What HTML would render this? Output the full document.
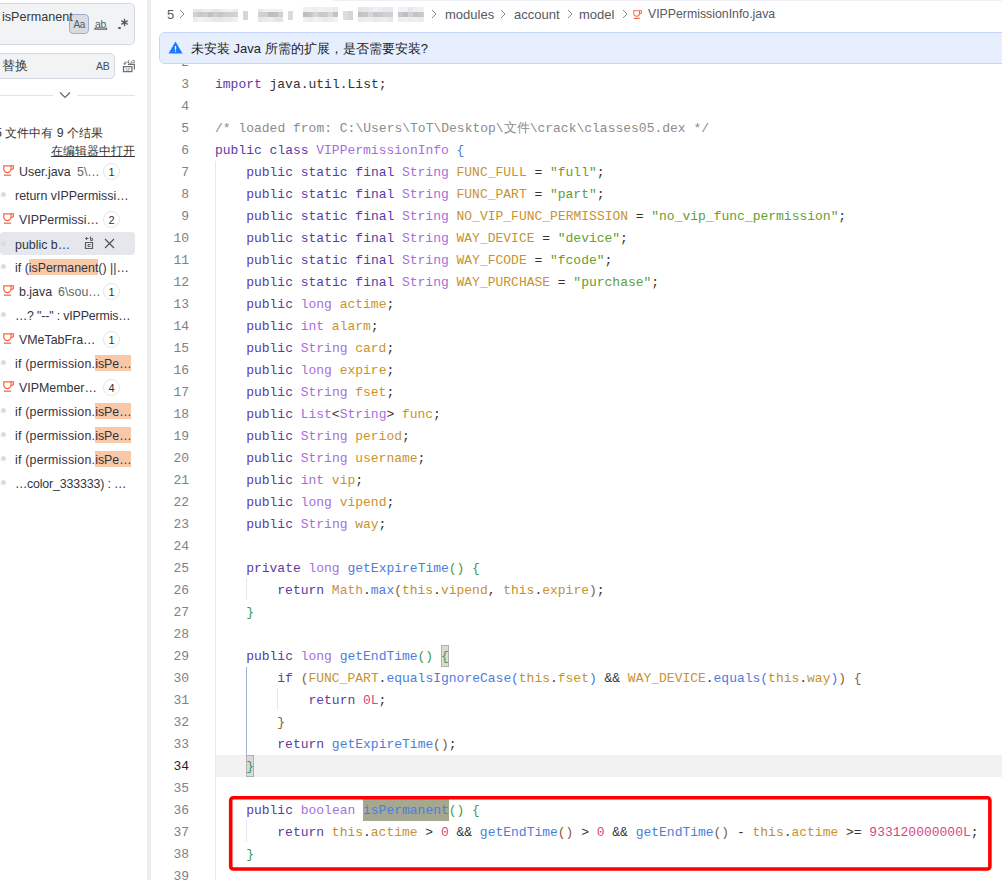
<!DOCTYPE html>
<html><head><meta charset="utf-8">
<style>
*{box-sizing:border-box}
html,body{margin:0;padding:0;width:1002px;height:880px;overflow:hidden;background:#fff;font-family:"Liberation Sans",sans-serif}
.abs{position:absolute}
#side{position:absolute;left:0;top:0;width:147px;height:880px;background:#fff;overflow:hidden}
#strip{position:absolute;left:147px;top:0;width:4px;height:880px;background:#ebedf1}
#editor{position:absolute;left:151px;top:0;width:851px;height:880px;background:#fff;overflow:hidden}
.search{position:absolute;left:-6px;top:3px;width:141px;height:41.5px;background:#f2f3f5;border:1px solid #d3d9e3;border-radius:5px}
.replace{position:absolute;left:-6px;top:53px;width:121px;height:26px;background:#f2f3f5;border:1px solid #d3d9e3;border-radius:5px}
.stxt{position:absolute;font-size:13px;color:#2b2b2b;white-space:pre}
.row{position:absolute;left:0;width:135px;height:24px;font-size:12.4px;line-height:24px;white-space:pre;color:#33343f}
.row.sel{background:#e5e7ec;border-radius:4px;height:23.5px;margin-top:0.5px}
.dot{position:absolute;left:1px;top:9px;width:5px;height:5px;border-radius:50%;background:#dadde3}
.mt{position:absolute;left:15px;top:1px}
.fn{position:absolute;top:1px}
.fp{position:absolute;top:1px;color:#666}
.cup{position:absolute}
.badge{position:absolute;left:103px;top:3.5px;width:17px;height:17px;border:1px solid #e2e5ea;border-radius:50%;font-size:11px;line-height:16px;text-align:center;color:#333;background:#fff}
.hl{background:#f8c9a9;padding-top:2px}
.x{position:absolute;left:104px;top:0;font-size:13px;color:#555}
.rp{position:absolute;left:85px;top:7px;width:8px;height:10px;border:1px solid #777;border-radius:1px}
.ln{position:absolute;left:0;width:38px;height:22px;line-height:22px;text-align:right;font-family:"Liberation Mono",monospace;font-size:13px}
.cl{position:absolute;left:64px;height:22px;line-height:22px;font-family:"Liberation Mono",monospace;font-size:13px;white-space:pre}
.guide{position:absolute;width:1px;background:#e3e7ee}
</style></head><body>
<div id="side">
  <div class="search"></div>
  <div class="abs" style="left:69px;top:14px;width:20px;height:19.5px;background:#d7dbe2;border:1px solid #9fb1cb;border-radius:4px"></div>
  <div class="stxt" style="left:2px;top:10px;font-size:12.6px;color:#383838;z-index:2">isPermanent</div>
  <div class="abs" style="left:73.5px;top:18.5px;font-size:10px;line-height:12px;color:#555a62;letter-spacing:-0.3px">Aa</div>
  <div class="abs" style="left:95px;top:17.5px;font-size:10.5px;line-height:12px;color:#555a62;letter-spacing:-0.3px">ab</div>
  <svg class="abs" style="left:94px;top:27px" width="14" height="4" viewBox="0 0 14 4"><path d="M1 0.8v1.4h11.5v-1.4" fill="none" stroke="#555a62" stroke-width="1.2"/></svg>
  <div class="abs" style="left:118px;top:26.5px;width:2.5px;height:2.5px;border-radius:50%;background:#555a62"></div>
  <svg class="abs" style="left:120px;top:18px" width="9" height="9" viewBox="0 0 9 9"><path d="M4.5 0.8v7.4M1.3 2.65l6.4 3.7M1.3 6.35l6.4-3.7" stroke="#555a62" stroke-width="1.3"/></svg>
  <div class="replace"></div>
  <div class="stxt" style="left:2px;top:58px;color:#3a3a3a;font-size:12.6px">替换</div>
  <div class="abs" style="left:96px;top:59px;font-size:10.5px;line-height:14px;color:#4a4e55;letter-spacing:-0.2px">AB</div>
  <svg class="abs" style="left:122px;top:59px" width="14" height="14" viewBox="0 0 14 14"><path d="M1.5 7.6h8.4v5.1H1.5z" fill="none" stroke="#6b6f76" stroke-width="1.3"/><path d="M6 5.3h6.4v5.2" fill="none" stroke="#6b6f76" stroke-width="1.2"/><path d="M3.6 9.6h1.2M6.2 9.6h1.5M4 11h3.6" stroke="#8a8e94" stroke-width="0.9"/><path d="M1 4.2h3.4L2.7 6z" fill="#6b6f76"/><path d="M2.7 4.4V3.2h3.4" fill="none" stroke="#8a8e94" stroke-width="1"/><path d="M6.5 1.2v3h3v-2M10.3 1.5h2v2.2h-2" fill="none" stroke="#8a8e94" stroke-width="1"/></svg>
  <div class="abs" style="left:0;top:95px;width:53px;height:1px;background:#dfe3ea"></div>
  <div class="abs" style="left:77px;top:95px;width:58px;height:1px;background:#dfe3ea"></div>
  <svg class="abs" style="left:59px;top:91px" width="12" height="8" viewBox="0 0 12 8"><path d="M1 1.5l5 5 5-5" fill="none" stroke="#666" stroke-width="1.2"/></svg>
  <div class="stxt" style="left:-5px;top:124.5px;font-size:12.4px;color:#333">5 文件中有 9 个结果</div>
  <div class="stxt" style="left:51px;top:143px;font-size:12.4px;color:#333;text-decoration:underline">在编辑器中打开</div>
  <div class="row" style="top:159px"><svg class="cup" style="left:2.5px;top:6px" width="12" height="12" viewBox="0 0 12 12"><path d="M0.8 0.8h7.2v3.2a3.6 3.6 0 0 1-7.2 0z" fill="none" stroke="#fb6848" stroke-width="1.25"/><path d="M8 0.8h2.4v1.6a2.2 2.2 0 0 1-2.4 2.2" fill="none" stroke="#fb6848" stroke-width="1.25"/><path d="M1 10.2h7.2" stroke="#fb6848" stroke-width="1.25"/></svg><span class="fn" style="left:19px">User.java</span><span class="fp" style="left:77px">5\<span style="letter-spacing:-1.5px;margin-right:1px">…</span></span><span class="badge">1</span></div>
<div class="row" style="top:183px"><span class="dot"></span><span class="mt" style="">return vIPPermissi<span style="letter-spacing:-1.5px;margin-right:1px">…</span></span></div>
<div class="row" style="top:207px"><svg class="cup" style="left:2.5px;top:6px" width="12" height="12" viewBox="0 0 12 12"><path d="M0.8 0.8h7.2v3.2a3.6 3.6 0 0 1-7.2 0z" fill="none" stroke="#fb6848" stroke-width="1.25"/><path d="M8 0.8h2.4v1.6a2.2 2.2 0 0 1-2.4 2.2" fill="none" stroke="#fb6848" stroke-width="1.25"/><path d="M1 10.2h7.2" stroke="#fb6848" stroke-width="1.25"/></svg><span class="fn" style="left:19px">VIPPermissi<span style="letter-spacing:-1.5px;margin-right:1px">…</span></span><span class="badge">2</span></div>
<div class="row sel" style="top:231px"><span class="dot"></span><span class="mt">public b<span style="letter-spacing:-1.5px;margin-right:1px">…</span></span><svg class="abs" style="left:84px;top:3.5px" width="10" height="14" viewBox="0 0 10 14"><path d="M1.5 7.5h7v6h-7z" fill="none" stroke="#5a5e66" stroke-width="1.2"/><path d="M4 9.5h2.5M4 9.5v2h2.5" fill="none" stroke="#5a5e66" stroke-width="1"/><path d="M1.5 3.5h3M3 2l-1.5 1.5L3 5" fill="none" stroke="#5a5e66" stroke-width="1"/><path d="M6.5 1.5v4h2v-2h-2" fill="none" stroke="#5a5e66" stroke-width="1"/></svg><svg class="abs" style="left:104px;top:6.2px" width="11" height="11" viewBox="0 0 11 11"><path d="M1 1l9 9M10 1l-9 9" stroke="#4a4e56" stroke-width="1.1"/></svg></div>
<div class="row" style="top:255px"><span class="dot"></span><span class="mt"><span style="">if (</span><span class="hl">isPermanent</span>() ||<span style="letter-spacing:-1.5px;margin-right:1px">…</span></span></div>
<div class="row" style="top:279px"><svg class="cup" style="left:2.5px;top:6px" width="12" height="12" viewBox="0 0 12 12"><path d="M0.8 0.8h7.2v3.2a3.6 3.6 0 0 1-7.2 0z" fill="none" stroke="#fb6848" stroke-width="1.25"/><path d="M8 0.8h2.4v1.6a2.2 2.2 0 0 1-2.4 2.2" fill="none" stroke="#fb6848" stroke-width="1.25"/><path d="M1 10.2h7.2" stroke="#fb6848" stroke-width="1.25"/></svg><span class="fn" style="left:19px">b.java</span><span class="fp" style="left:58px">6\sou<span style="letter-spacing:-1.5px;margin-right:1px">…</span></span><span class="badge">1</span></div>
<div class="row" style="top:303px"><span class="dot"></span><span class="mt" style=";letter-spacing:-0.15px"><span style="letter-spacing:-1.5px;margin-right:1px">…</span>? &quot;--&quot; : vIPPermis<span style="letter-spacing:-1.5px;margin-right:1px">…</span></span></div>
<div class="row" style="top:327px"><svg class="cup" style="left:2.5px;top:6px" width="12" height="12" viewBox="0 0 12 12"><path d="M0.8 0.8h7.2v3.2a3.6 3.6 0 0 1-7.2 0z" fill="none" stroke="#fb6848" stroke-width="1.25"/><path d="M8 0.8h2.4v1.6a2.2 2.2 0 0 1-2.4 2.2" fill="none" stroke="#fb6848" stroke-width="1.25"/><path d="M1 10.2h7.2" stroke="#fb6848" stroke-width="1.25"/></svg><span class="fn" style="left:19px">VMeTabFra<span style="letter-spacing:-1.5px;margin-right:1px">…</span></span><span class="badge">1</span></div>
<div class="row" style="top:351px"><span class="dot"></span><span class="mt"><span style="letter-spacing:0.2px">if (permission.</span><span class="hl">isPe<span style="letter-spacing:-1.5px;margin-right:1px">…</span></span></span></div>
<div class="row" style="top:375px"><svg class="cup" style="left:2.5px;top:6px" width="12" height="12" viewBox="0 0 12 12"><path d="M0.8 0.8h7.2v3.2a3.6 3.6 0 0 1-7.2 0z" fill="none" stroke="#fb6848" stroke-width="1.25"/><path d="M8 0.8h2.4v1.6a2.2 2.2 0 0 1-2.4 2.2" fill="none" stroke="#fb6848" stroke-width="1.25"/><path d="M1 10.2h7.2" stroke="#fb6848" stroke-width="1.25"/></svg><span class="fn" style="left:19px">VIPMember<span style="letter-spacing:-1.5px;margin-right:1px">…</span></span><span class="badge">4</span></div>
<div class="row" style="top:399px"><span class="dot"></span><span class="mt"><span style="letter-spacing:0.2px">if (permission.</span><span class="hl">isPe<span style="letter-spacing:-1.5px;margin-right:1px">…</span></span></span></div>
<div class="row" style="top:423px"><span class="dot"></span><span class="mt"><span style="letter-spacing:0.2px">if (permission.</span><span class="hl">isPe<span style="letter-spacing:-1.5px;margin-right:1px">…</span></span></span></div>
<div class="row" style="top:447px"><span class="dot"></span><span class="mt"><span style="letter-spacing:0.2px">if (permission.</span><span class="hl">isPe<span style="letter-spacing:-1.5px;margin-right:1px">…</span></span></span></div>
<div class="row" style="top:471px"><span class="dot"></span><span class="mt" style=";letter-spacing:-0.15px"><span style="letter-spacing:-1.5px;margin-right:1px">…</span>color_333333) : <span style="letter-spacing:-1.5px;margin-right:1px">…</span></span></div>
</div>
<div id="strip"></div>
<div id="editor">
  <div class="abs" style="left:182px;top:0;width:700px;height:1px;background:#eef0f5"></div>
  <!-- code -->
  <div class="abs" style="left:64px;top:755px;width:800px;height:22px;background:#f2f2f2"></div>
  <div class="guide" style="left:64px;top:161px;height:719px"></div>
  <div class="guide" style="left:95px;top:578px;height:22px"></div>
  <div class="guide" style="left:95px;top:667px;height:88px;background:#a3b3d2"></div>
  <div class="guide" style="left:126px;top:688px;height:22px"></div>
  <div class="guide" style="left:95px;top:820px;height:22px"></div>
  <div class="abs" style="left:95px;top:755px;width:8px;height:22px;background:#dadada;border:1px solid #b0b0b0"></div>
  <div class="abs" style="left:290px;top:645px;width:8px;height:22px;background:#dadada;border:1px solid #b0b0b0"></div>
  <div class="abs" style="left:212px;top:799px;width:86px;height:22px;background:#a5a890"></div>
  <div class="ln" style="top:52px;color:#7d828a">2</div>
<div class="cl" style="top:52px"></div>
<div class="ln" style="top:74px;color:#7d828a">3</div>
<div class="cl" style="top:74px"><span style="position:absolute;left:0.00px;color:#5a3ca6">import</span><span style="position:absolute;left:54.53px;color:#333333">java.util.List;</span></div>
<div class="ln" style="top:96px;color:#7d828a">4</div>
<div class="cl" style="top:96px"></div>
<div class="ln" style="top:118px;color:#7d828a">5</div>
<div class="cl" style="top:118px"><span style="position:absolute;left:0.00px;color:#8c8c8c">/* loaded from: C:\Users\ToT\Desktop\文件\crack\classes05.dex */</span></div>
<div class="ln" style="top:140px;color:#7d828a">6</div>
<div class="cl" style="top:140px"><span style="position:absolute;left:0.00px;color:#5a3ca6">public class</span><span style="position:absolute;left:101.27px;color:#a66fdc">VIPPermissionInfo</span><span style="position:absolute;left:241.49px;color:#3d7bea">{</span></div>
<div class="ln" style="top:162px;color:#7d828a">7</div>
<div class="cl" style="top:162px"><span style="position:absolute;left:31.16px;color:#5a3ca6">public static final</span><span style="position:absolute;left:186.96px;color:#a66fdc">String</span><span style="position:absolute;left:241.49px;color:#c8932e">FUNC_FULL</span><span style="position:absolute;left:319.39px;color:#333333">=</span><span style="position:absolute;left:334.97px;color:#62a033">&quot;full&quot;</span><span style="position:absolute;left:381.71px;color:#333333">;</span></div>
<div class="ln" style="top:184px;color:#7d828a">8</div>
<div class="cl" style="top:184px"><span style="position:absolute;left:31.16px;color:#5a3ca6">public static final</span><span style="position:absolute;left:186.96px;color:#a66fdc">String</span><span style="position:absolute;left:241.49px;color:#c8932e">FUNC_PART</span><span style="position:absolute;left:319.39px;color:#333333">=</span><span style="position:absolute;left:334.97px;color:#62a033">&quot;part&quot;</span><span style="position:absolute;left:381.71px;color:#333333">;</span></div>
<div class="ln" style="top:206px;color:#7d828a">9</div>
<div class="cl" style="top:206px"><span style="position:absolute;left:31.16px;color:#5a3ca6">public static final</span><span style="position:absolute;left:186.96px;color:#a66fdc">String</span><span style="position:absolute;left:241.49px;color:#c8932e">NO_VIP_FUNC_PERMISSION</span><span style="position:absolute;left:420.66px;color:#333333">=</span><span style="position:absolute;left:436.24px;color:#62a033">&quot;no_vip_func_permission&quot;</span><span style="position:absolute;left:623.20px;color:#333333">;</span></div>
<div class="ln" style="top:228px;color:#7d828a">10</div>
<div class="cl" style="top:228px"><span style="position:absolute;left:31.16px;color:#5a3ca6">public static final</span><span style="position:absolute;left:186.96px;color:#a66fdc">String</span><span style="position:absolute;left:241.49px;color:#c8932e">WAY_DEVICE</span><span style="position:absolute;left:327.18px;color:#333333">=</span><span style="position:absolute;left:342.76px;color:#62a033">&quot;device&quot;</span><span style="position:absolute;left:405.08px;color:#333333">;</span></div>
<div class="ln" style="top:250px;color:#7d828a">11</div>
<div class="cl" style="top:250px"><span style="position:absolute;left:31.16px;color:#5a3ca6">public static final</span><span style="position:absolute;left:186.96px;color:#a66fdc">String</span><span style="position:absolute;left:241.49px;color:#c8932e">WAY_FCODE</span><span style="position:absolute;left:319.39px;color:#333333">=</span><span style="position:absolute;left:334.97px;color:#62a033">&quot;fcode&quot;</span><span style="position:absolute;left:389.50px;color:#333333">;</span></div>
<div class="ln" style="top:272px;color:#7d828a">12</div>
<div class="cl" style="top:272px"><span style="position:absolute;left:31.16px;color:#5a3ca6">public static final</span><span style="position:absolute;left:186.96px;color:#a66fdc">String</span><span style="position:absolute;left:241.49px;color:#c8932e">WAY_PURCHASE</span><span style="position:absolute;left:342.76px;color:#333333">=</span><span style="position:absolute;left:358.34px;color:#62a033">&quot;purchase&quot;</span><span style="position:absolute;left:436.24px;color:#333333">;</span></div>
<div class="ln" style="top:294px;color:#7d828a">13</div>
<div class="cl" style="top:294px"><span style="position:absolute;left:31.16px;color:#5a3ca6">public</span><span style="position:absolute;left:85.69px;color:#a66fdc">long</span><span style="position:absolute;left:124.64px;color:#c8932e">actime</span><span style="position:absolute;left:171.38px;color:#333333">;</span></div>
<div class="ln" style="top:316px;color:#7d828a">14</div>
<div class="cl" style="top:316px"><span style="position:absolute;left:31.16px;color:#5a3ca6">public</span><span style="position:absolute;left:85.69px;color:#a66fdc">int</span><span style="position:absolute;left:116.85px;color:#c8932e">alarm</span><span style="position:absolute;left:155.80px;color:#333333">;</span></div>
<div class="ln" style="top:338px;color:#7d828a">15</div>
<div class="cl" style="top:338px"><span style="position:absolute;left:31.16px;color:#5a3ca6">public</span><span style="position:absolute;left:85.69px;color:#a66fdc">String</span><span style="position:absolute;left:140.22px;color:#c8932e">card</span><span style="position:absolute;left:171.38px;color:#333333">;</span></div>
<div class="ln" style="top:360px;color:#7d828a">16</div>
<div class="cl" style="top:360px"><span style="position:absolute;left:31.16px;color:#5a3ca6">public</span><span style="position:absolute;left:85.69px;color:#a66fdc">long</span><span style="position:absolute;left:124.64px;color:#c8932e">expire</span><span style="position:absolute;left:171.38px;color:#333333">;</span></div>
<div class="ln" style="top:382px;color:#7d828a">17</div>
<div class="cl" style="top:382px"><span style="position:absolute;left:31.16px;color:#5a3ca6">public</span><span style="position:absolute;left:85.69px;color:#a66fdc">String</span><span style="position:absolute;left:140.22px;color:#c8932e">fset</span><span style="position:absolute;left:171.38px;color:#333333">;</span></div>
<div class="ln" style="top:404px;color:#7d828a">18</div>
<div class="cl" style="top:404px"><span style="position:absolute;left:31.16px;color:#5a3ca6">public</span><span style="position:absolute;left:85.69px;color:#a66fdc">List</span><span style="position:absolute;left:116.85px;color:#333333">&lt;</span><span style="position:absolute;left:124.64px;color:#a66fdc">String</span><span style="position:absolute;left:171.38px;color:#333333">&gt;</span><span style="position:absolute;left:186.96px;color:#c8932e">func</span><span style="position:absolute;left:218.12px;color:#333333">;</span></div>
<div class="ln" style="top:426px;color:#7d828a">19</div>
<div class="cl" style="top:426px"><span style="position:absolute;left:31.16px;color:#5a3ca6">public</span><span style="position:absolute;left:85.69px;color:#a66fdc">String</span><span style="position:absolute;left:140.22px;color:#c8932e">period</span><span style="position:absolute;left:186.96px;color:#333333">;</span></div>
<div class="ln" style="top:448px;color:#7d828a">20</div>
<div class="cl" style="top:448px"><span style="position:absolute;left:31.16px;color:#5a3ca6">public</span><span style="position:absolute;left:85.69px;color:#a66fdc">String</span><span style="position:absolute;left:140.22px;color:#c8932e">username</span><span style="position:absolute;left:202.54px;color:#333333">;</span></div>
<div class="ln" style="top:470px;color:#7d828a">21</div>
<div class="cl" style="top:470px"><span style="position:absolute;left:31.16px;color:#5a3ca6">public</span><span style="position:absolute;left:85.69px;color:#a66fdc">int</span><span style="position:absolute;left:116.85px;color:#c8932e">vip</span><span style="position:absolute;left:140.22px;color:#333333">;</span></div>
<div class="ln" style="top:492px;color:#7d828a">22</div>
<div class="cl" style="top:492px"><span style="position:absolute;left:31.16px;color:#5a3ca6">public</span><span style="position:absolute;left:85.69px;color:#a66fdc">long</span><span style="position:absolute;left:124.64px;color:#c8932e">vipend</span><span style="position:absolute;left:171.38px;color:#333333">;</span></div>
<div class="ln" style="top:514px;color:#7d828a">23</div>
<div class="cl" style="top:514px"><span style="position:absolute;left:31.16px;color:#5a3ca6">public</span><span style="position:absolute;left:85.69px;color:#a66fdc">String</span><span style="position:absolute;left:140.22px;color:#c8932e">way</span><span style="position:absolute;left:163.59px;color:#333333">;</span></div>
<div class="ln" style="top:536px;color:#7d828a">24</div>
<div class="cl" style="top:536px"></div>
<div class="ln" style="top:558px;color:#7d828a">25</div>
<div class="cl" style="top:558px"><span style="position:absolute;left:31.16px;color:#5a3ca6">private</span><span style="position:absolute;left:93.48px;color:#a66fdc">long</span><span style="position:absolute;left:132.43px;color:#4d7ddb">getExpireTime</span><span style="position:absolute;left:233.70px;color:#3f9a4a">()</span><span style="position:absolute;left:257.07px;color:#3f9a4a">{</span></div>
<div class="ln" style="top:580px;color:#7d828a">26</div>
<div class="cl" style="top:580px"><span style="position:absolute;left:62.32px;color:#5a3ca6">return</span><span style="position:absolute;left:116.85px;color:#c59157">Math</span><span style="position:absolute;left:148.01px;color:#333333">.</span><span style="position:absolute;left:155.80px;color:#4d7ddb">max</span><span style="position:absolute;left:179.17px;color:#86603a">(</span><span style="position:absolute;left:186.96px;color:#c0902c">this</span><span style="position:absolute;left:218.12px;color:#333333">.</span><span style="position:absolute;left:225.91px;color:#c8932e">vipend</span><span style="position:absolute;left:272.65px;color:#333333">,</span><span style="position:absolute;left:288.23px;color:#c0902c">this</span><span style="position:absolute;left:319.39px;color:#333333">.</span><span style="position:absolute;left:327.18px;color:#c8932e">expire</span><span style="position:absolute;left:373.92px;color:#86603a">)</span><span style="position:absolute;left:381.71px;color:#333333">;</span></div>
<div class="ln" style="top:602px;color:#7d828a">27</div>
<div class="cl" style="top:602px"><span style="position:absolute;left:31.16px;color:#3f9a4a">}</span></div>
<div class="ln" style="top:624px;color:#7d828a">28</div>
<div class="cl" style="top:624px"></div>
<div class="ln" style="top:646px;color:#7d828a">29</div>
<div class="cl" style="top:646px"><span style="position:absolute;left:31.16px;color:#5a3ca6">public</span><span style="position:absolute;left:85.69px;color:#a66fdc">long</span><span style="position:absolute;left:124.64px;color:#4d7ddb">getEndTime</span><span style="position:absolute;left:202.54px;color:#3f9a4a">()</span><span style="position:absolute;left:225.91px;color:#3f9a4a">{</span></div>
<div class="ln" style="top:668px;color:#7d828a">30</div>
<div class="cl" style="top:668px"><span style="position:absolute;left:62.32px;color:#5a3ca6">if</span><span style="position:absolute;left:85.69px;color:#86603a">(</span><span style="position:absolute;left:93.48px;color:#c8932e">FUNC_PART</span><span style="position:absolute;left:163.59px;color:#333333">.</span><span style="position:absolute;left:171.38px;color:#4d7ddb">equalsIgnoreCase</span><span style="position:absolute;left:296.02px;color:#3d7bea">(</span><span style="position:absolute;left:303.81px;color:#c0902c">this</span><span style="position:absolute;left:334.97px;color:#333333">.</span><span style="position:absolute;left:342.76px;color:#c8932e">fset</span><span style="position:absolute;left:373.92px;color:#3d7bea">)</span><span style="position:absolute;left:389.50px;color:#333333">&amp;&amp;</span><span style="position:absolute;left:412.87px;color:#c8932e">WAY_DEVICE</span><span style="position:absolute;left:490.77px;color:#333333">.</span><span style="position:absolute;left:498.56px;color:#4d7ddb">equals</span><span style="position:absolute;left:545.30px;color:#3d7bea">(</span><span style="position:absolute;left:553.09px;color:#c0902c">this</span><span style="position:absolute;left:584.25px;color:#333333">.</span><span style="position:absolute;left:592.04px;color:#c8932e">way</span><span style="position:absolute;left:615.41px;color:#3d7bea">)</span><span style="position:absolute;left:623.20px;color:#86603a">)</span><span style="position:absolute;left:638.78px;color:#86603a">{</span></div>
<div class="ln" style="top:690px;color:#7d828a">31</div>
<div class="cl" style="top:690px"><span style="position:absolute;left:93.48px;color:#5a3ca6">return</span><span style="position:absolute;left:148.01px;color:#d4487f">0L</span><span style="position:absolute;left:163.59px;color:#333333">;</span></div>
<div class="ln" style="top:712px;color:#7d828a">32</div>
<div class="cl" style="top:712px"><span style="position:absolute;left:62.32px;color:#86603a">}</span></div>
<div class="ln" style="top:734px;color:#7d828a">33</div>
<div class="cl" style="top:734px"><span style="position:absolute;left:62.32px;color:#5a3ca6">return</span><span style="position:absolute;left:116.85px;color:#4d7ddb">getExpireTime</span><span style="position:absolute;left:218.12px;color:#86603a">()</span><span style="position:absolute;left:233.70px;color:#333333">;</span></div>
<div class="ln" style="top:756px;color:#1f1f1f">34</div>
<div class="cl" style="top:756px"><span style="position:absolute;left:31.16px;color:#3f9a4a">}</span></div>
<div class="ln" style="top:778px;color:#7d828a">35</div>
<div class="cl" style="top:778px"></div>
<div class="ln" style="top:800px;color:#7d828a">36</div>
<div class="cl" style="top:800px"><span style="position:absolute;left:31.16px;color:#5a3ca6">public</span><span style="position:absolute;left:85.69px;color:#a66fdc">boolean</span><span style="position:absolute;left:148.01px;color:#4d7ddb">isPermanent</span><span style="position:absolute;left:233.70px;color:#3f9a4a">()</span><span style="position:absolute;left:257.07px;color:#3f9a4a">{</span></div>
<div class="ln" style="top:822px;color:#7d828a">37</div>
<div class="cl" style="top:822px"><span style="position:absolute;left:62.32px;color:#5a3ca6">return</span><span style="position:absolute;left:116.85px;color:#c0902c">this</span><span style="position:absolute;left:148.01px;color:#333333">.</span><span style="position:absolute;left:155.80px;color:#c8932e">actime</span><span style="position:absolute;left:210.33px;color:#333333">&gt;</span><span style="position:absolute;left:225.91px;color:#d4487f">0</span><span style="position:absolute;left:241.49px;color:#333333">&amp;&amp;</span><span style="position:absolute;left:264.86px;color:#4d7ddb">getEndTime</span><span style="position:absolute;left:342.76px;color:#86603a">()</span><span style="position:absolute;left:366.13px;color:#333333">&gt;</span><span style="position:absolute;left:381.71px;color:#d4487f">0</span><span style="position:absolute;left:397.29px;color:#333333">&amp;&amp;</span><span style="position:absolute;left:420.66px;color:#4d7ddb">getEndTime</span><span style="position:absolute;left:498.56px;color:#86603a">()</span><span style="position:absolute;left:521.93px;color:#333333">-</span><span style="position:absolute;left:537.51px;color:#c0902c">this</span><span style="position:absolute;left:568.67px;color:#333333">.</span><span style="position:absolute;left:576.46px;color:#c8932e">actime</span><span style="position:absolute;left:630.99px;color:#333333">&gt;=</span><span style="position:absolute;left:654.36px;color:#d4487f">933120000000L</span><span style="position:absolute;left:755.63px;color:#333333">;</span></div>
<div class="ln" style="top:844px;color:#7d828a">38</div>
<div class="cl" style="top:844px"><span style="position:absolute;left:31.16px;color:#3f9a4a">}</span></div>
<div class="ln" style="top:866px;color:#7d828a">39</div>
<div class="cl" style="top:866px"></div>
  <!-- breadcrumb -->
  <div style="position:absolute;left:0;top:0;filter:blur(0.6px)"><div class="abs" style="left:42px;top:9px;width:5px;height:3px;background:rgb(231,231,234)"></div><div class="abs" style="left:42px;top:12px;width:5px;height:5px;background:rgb(208,208,211)"></div><div class="abs" style="left:42px;top:17px;width:5px;height:5px;background:rgb(236,236,239)"></div><div class="abs" style="left:47px;top:9px;width:5px;height:3px;background:rgb(230,230,233)"></div><div class="abs" style="left:47px;top:12px;width:5px;height:5px;background:rgb(201,201,204)"></div><div class="abs" style="left:47px;top:17px;width:5px;height:5px;background:rgb(242,242,245)"></div><div class="abs" style="left:52px;top:9px;width:5px;height:3px;background:rgb(237,237,240)"></div><div class="abs" style="left:52px;top:12px;width:5px;height:5px;background:rgb(205,205,208)"></div><div class="abs" style="left:52px;top:17px;width:5px;height:5px;background:rgb(238,238,241)"></div><div class="abs" style="left:57px;top:9px;width:5px;height:3px;background:rgb(237,237,240)"></div><div class="abs" style="left:57px;top:12px;width:5px;height:5px;background:rgb(192,192,195)"></div><div class="abs" style="left:57px;top:17px;width:5px;height:5px;background:rgb(237,237,240)"></div><div class="abs" style="left:62px;top:9px;width:5px;height:3px;background:rgb(228,228,231)"></div><div class="abs" style="left:62px;top:12px;width:5px;height:5px;background:rgb(205,205,208)"></div><div class="abs" style="left:62px;top:17px;width:5px;height:5px;background:rgb(232,232,235)"></div><div class="abs" style="left:67px;top:9px;width:5px;height:3px;background:rgb(236,236,239)"></div><div class="abs" style="left:67px;top:12px;width:5px;height:5px;background:rgb(197,197,200)"></div><div class="abs" style="left:67px;top:17px;width:5px;height:5px;background:rgb(231,231,234)"></div><div class="abs" style="left:72px;top:9px;width:5px;height:3px;background:rgb(239,239,242)"></div><div class="abs" style="left:72px;top:12px;width:5px;height:5px;background:rgb(205,205,208)"></div><div class="abs" style="left:72px;top:17px;width:5px;height:5px;background:rgb(236,236,239)"></div><div class="abs" style="left:77px;top:9px;width:5px;height:3px;background:rgb(241,241,244)"></div><div class="abs" style="left:77px;top:12px;width:5px;height:5px;background:rgb(207,207,210)"></div><div class="abs" style="left:77px;top:17px;width:5px;height:5px;background:rgb(235,235,238)"></div><div class="abs" style="left:82px;top:9px;width:5px;height:3px;background:rgb(234,234,237)"></div><div class="abs" style="left:82px;top:12px;width:5px;height:5px;background:rgb(210,210,213)"></div><div class="abs" style="left:82px;top:17px;width:5px;height:5px;background:rgb(241,241,244)"></div><div class="abs" style="left:92px;top:11px;width:5px;height:9px;background:rgb(214,214,217)"></div><div class="abs" style="left:107px;top:9px;width:5px;height:3px;background:rgb(231,231,234)"></div><div class="abs" style="left:107px;top:12px;width:5px;height:5px;background:rgb(210,210,213)"></div><div class="abs" style="left:107px;top:17px;width:5px;height:5px;background:rgb(230,230,233)"></div><div class="abs" style="left:112px;top:9px;width:5px;height:3px;background:rgb(241,241,244)"></div><div class="abs" style="left:112px;top:12px;width:5px;height:5px;background:rgb(206,206,209)"></div><div class="abs" style="left:112px;top:17px;width:5px;height:5px;background:rgb(234,234,237)"></div><div class="abs" style="left:117px;top:9px;width:5px;height:3px;background:rgb(239,239,242)"></div><div class="abs" style="left:117px;top:12px;width:5px;height:5px;background:rgb(190,190,193)"></div><div class="abs" style="left:117px;top:17px;width:5px;height:5px;background:rgb(238,238,241)"></div><div class="abs" style="left:122px;top:9px;width:5px;height:3px;background:rgb(240,240,243)"></div><div class="abs" style="left:122px;top:12px;width:5px;height:5px;background:rgb(192,192,195)"></div><div class="abs" style="left:122px;top:17px;width:5px;height:5px;background:rgb(230,230,233)"></div><div class="abs" style="left:127px;top:9px;width:5px;height:3px;background:rgb(240,240,243)"></div><div class="abs" style="left:127px;top:12px;width:5px;height:5px;background:rgb(208,208,211)"></div><div class="abs" style="left:127px;top:17px;width:5px;height:5px;background:rgb(228,228,231)"></div><div class="abs" style="left:137px;top:11px;width:5px;height:9px;background:rgb(219,219,222)"></div><div class="abs" style="left:152px;top:7px;width:5px;height:5px;background:rgb(240,240,243)"></div><div class="abs" style="left:152px;top:12px;width:5px;height:5px;background:rgb(190,190,193)"></div><div class="abs" style="left:152px;top:17px;width:5px;height:5px;background:rgb(241,241,244)"></div><div class="abs" style="left:157px;top:7px;width:5px;height:5px;background:rgb(241,241,244)"></div><div class="abs" style="left:157px;top:12px;width:5px;height:5px;background:rgb(198,198,201)"></div><div class="abs" style="left:157px;top:17px;width:5px;height:5px;background:rgb(235,235,238)"></div><div class="abs" style="left:162px;top:7px;width:5px;height:5px;background:rgb(237,237,240)"></div><div class="abs" style="left:162px;top:12px;width:5px;height:5px;background:rgb(213,213,216)"></div><div class="abs" style="left:162px;top:17px;width:5px;height:5px;background:rgb(242,242,245)"></div><div class="abs" style="left:167px;top:7px;width:5px;height:5px;background:rgb(242,242,245)"></div><div class="abs" style="left:167px;top:12px;width:5px;height:5px;background:rgb(202,202,205)"></div><div class="abs" style="left:167px;top:17px;width:5px;height:5px;background:rgb(239,239,242)"></div><div class="abs" style="left:172px;top:7px;width:5px;height:5px;background:rgb(240,240,243)"></div><div class="abs" style="left:172px;top:12px;width:5px;height:5px;background:rgb(203,203,206)"></div><div class="abs" style="left:172px;top:17px;width:5px;height:5px;background:rgb(234,234,237)"></div><div class="abs" style="left:177px;top:7px;width:5px;height:5px;background:rgb(239,239,242)"></div><div class="abs" style="left:177px;top:12px;width:5px;height:5px;background:rgb(215,215,218)"></div><div class="abs" style="left:177px;top:17px;width:5px;height:5px;background:rgb(237,237,240)"></div><div class="abs" style="left:182px;top:7px;width:5px;height:5px;background:rgb(235,235,238)"></div><div class="abs" style="left:182px;top:12px;width:5px;height:5px;background:rgb(194,194,197)"></div><div class="abs" style="left:182px;top:17px;width:5px;height:5px;background:rgb(242,242,245)"></div><div class="abs" style="left:192px;top:11px;width:5px;height:9px;background:rgb(221,221,224)"></div><div class="abs" style="left:197px;top:11px;width:5px;height:9px;background:rgb(213,213,216)"></div><div class="abs" style="left:207px;top:7px;width:5px;height:5px;background:rgb(228,228,231)"></div><div class="abs" style="left:207px;top:12px;width:5px;height:5px;background:rgb(194,194,197)"></div><div class="abs" style="left:207px;top:17px;width:5px;height:5px;background:rgb(235,235,238)"></div><div class="abs" style="left:212px;top:7px;width:5px;height:5px;background:rgb(231,231,234)"></div><div class="abs" style="left:212px;top:12px;width:5px;height:5px;background:rgb(198,198,201)"></div><div class="abs" style="left:212px;top:17px;width:5px;height:5px;background:rgb(238,238,241)"></div><div class="abs" style="left:217px;top:7px;width:5px;height:5px;background:rgb(234,234,237)"></div><div class="abs" style="left:217px;top:12px;width:5px;height:5px;background:rgb(214,214,217)"></div><div class="abs" style="left:217px;top:17px;width:5px;height:5px;background:rgb(238,238,241)"></div><div class="abs" style="left:222px;top:7px;width:5px;height:5px;background:rgb(241,241,244)"></div><div class="abs" style="left:222px;top:12px;width:5px;height:5px;background:rgb(199,199,202)"></div><div class="abs" style="left:222px;top:17px;width:5px;height:5px;background:rgb(234,234,237)"></div><div class="abs" style="left:227px;top:7px;width:5px;height:5px;background:rgb(236,236,239)"></div><div class="abs" style="left:227px;top:12px;width:5px;height:5px;background:rgb(202,202,205)"></div><div class="abs" style="left:227px;top:17px;width:5px;height:5px;background:rgb(237,237,240)"></div><div class="abs" style="left:232px;top:7px;width:5px;height:5px;background:rgb(233,233,236)"></div><div class="abs" style="left:232px;top:12px;width:5px;height:5px;background:rgb(207,207,210)"></div><div class="abs" style="left:232px;top:17px;width:5px;height:5px;background:rgb(237,237,240)"></div><div class="abs" style="left:237px;top:7px;width:5px;height:5px;background:rgb(234,234,237)"></div><div class="abs" style="left:237px;top:12px;width:5px;height:5px;background:rgb(208,208,211)"></div><div class="abs" style="left:237px;top:17px;width:5px;height:5px;background:rgb(231,231,234)"></div><div class="abs" style="left:247px;top:7px;width:5px;height:5px;background:rgb(242,242,245)"></div><div class="abs" style="left:247px;top:12px;width:5px;height:5px;background:rgb(200,200,203)"></div><div class="abs" style="left:247px;top:17px;width:5px;height:5px;background:rgb(238,238,241)"></div><div class="abs" style="left:252px;top:7px;width:5px;height:5px;background:rgb(242,242,245)"></div><div class="abs" style="left:252px;top:12px;width:5px;height:5px;background:rgb(190,190,193)"></div><div class="abs" style="left:252px;top:17px;width:5px;height:5px;background:rgb(241,241,244)"></div><div class="abs" style="left:257px;top:7px;width:5px;height:5px;background:rgb(232,232,235)"></div><div class="abs" style="left:257px;top:12px;width:5px;height:5px;background:rgb(209,209,212)"></div><div class="abs" style="left:257px;top:17px;width:5px;height:5px;background:rgb(238,238,241)"></div><div class="abs" style="left:262px;top:7px;width:5px;height:5px;background:rgb(239,239,242)"></div><div class="abs" style="left:262px;top:12px;width:5px;height:5px;background:rgb(195,195,198)"></div><div class="abs" style="left:262px;top:17px;width:5px;height:5px;background:rgb(239,239,242)"></div><div class="abs" style="left:267px;top:7px;width:5px;height:5px;background:rgb(241,241,244)"></div><div class="abs" style="left:267px;top:12px;width:5px;height:5px;background:rgb(200,200,203)"></div><div class="abs" style="left:267px;top:17px;width:5px;height:5px;background:rgb(236,236,239)"></div><div class="abs" style="left:272px;top:7px;width:1px;height:5px;background:rgb(242,242,245)"></div><div class="abs" style="left:272px;top:12px;width:1px;height:5px;background:rgb(208,208,211)"></div><div class="abs" style="left:272px;top:17px;width:1px;height:5px;background:rgb(237,237,240)"></div></div>
  <div class="abs" style="left:0;top:0;width:851px;height:30px;background:transparent"></div>
  <div class="stxt" style="left:16px;top:7px;color:#555960">5</div>
  <svg class="abs" style="left:28px;top:9px" width="6" height="10" viewBox="0 0 6 10"><path d="M1 1l4 4-4 4" fill="none" stroke="#888" stroke-width="1"/></svg>
  <svg class="abs" style="left:280px;top:9px" width="6" height="10" viewBox="0 0 6 10"><path d="M1 1l4 4-4 4" fill="none" stroke="#888" stroke-width="1"/></svg>
  <div class="stxt" style="left:294px;top:7px;color:#555960">modules</div>
  <svg class="abs" style="left:349px;top:9px" width="6" height="10" viewBox="0 0 6 10"><path d="M1 1l4 4-4 4" fill="none" stroke="#888" stroke-width="1"/></svg>
  <div class="stxt" style="left:363px;top:7px;color:#555960">account</div>
  <svg class="abs" style="left:416px;top:9px" width="6" height="10" viewBox="0 0 6 10"><path d="M1 1l4 4-4 4" fill="none" stroke="#888" stroke-width="1"/></svg>
  <div class="stxt" style="left:428px;top:7px;color:#555960">model</div>
  <svg class="abs" style="left:471px;top:9px" width="6" height="10" viewBox="0 0 6 10"><path d="M1 1l4 4-4 4" fill="none" stroke="#888" stroke-width="1"/></svg>
  <div class="abs" style="left:482px;top:10px;transform:scale(0.82);transform-origin:0 0"><svg class="cup" width="12" height="12" viewBox="0 0 12 12"><path d="M0.8 0.8h7.2v3.2a3.6 3.6 0 0 1-7.2 0z" fill="none" stroke="#fb6848" stroke-width="1.25"/><path d="M8 0.8h2.4v1.6a2.2 2.2 0 0 1-2.4 2.2" fill="none" stroke="#fb6848" stroke-width="1.25"/><path d="M1 10.2h7.2" stroke="#fb6848" stroke-width="1.25"/></svg></div>
  <div class="stxt" style="left:497px;top:7px;color:#555960;font-size:12.3px">VIPPermissionInfo.java</div>
  <!-- banner -->
  <div class="abs" style="left:8px;top:32px;width:860px;height:32px;background:#e7eefd;border:1px solid #c3d5fa;border-radius:6px"></div>
  <svg class="abs" style="left:17px;top:41px" width="15" height="13" viewBox="0 0 15 13"><path d="M7.5 0.5L14.5 12.5H0.5Z" fill="#1b7bfa"/><rect x="6.9" y="5" width="1.2" height="3.8" fill="#fff"/><rect x="6.9" y="9.6" width="1.2" height="1.2" fill="#fff"/></svg>
  <div class="stxt" style="left:40px;top:40px;color:#222">未安装 Java 所需的扩展，是否需要安装?</div>
  <!-- red box -->
  <svg class="abs" style="left:77px;top:795px" width="766" height="78" viewBox="0 0 766 78"><rect x="2.7" y="2.7" width="759.2" height="71.3" rx="2.5" fill="none" stroke="#ff0000" stroke-width="3.6"/></svg>
</div>
</body></html>
